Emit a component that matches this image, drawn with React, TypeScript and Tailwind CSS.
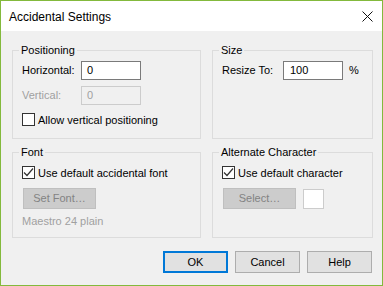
import type { ReactNode } from 'react';

const Group = ({ title, className, children }: { title: string; className: string; children: ReactNode }) => (
  <div className={`relative border border-[#dcdcdc] ${className}`}>
    <span className="absolute left-[6px] -top-[8px] bg-[#f0f0f0] px-[2px] leading-[14px]">{title}</span>
    {children}
  </div>
);

const CheckBox = ({ checked, label }: { checked?: boolean; label: string }) => (
  <div className="flex items-center h-[13px]">
    <div className="w-[13px] h-[13px] border border-[#333333] bg-white flex items-center justify-center">
      {checked && (
        <svg width="11" height="11" viewBox="0 0 11 11">
          <path d="M1 5.5 L4 8.5 L10 1.5" fill="none" stroke="#333333" strokeWidth="1.2" />
        </svg>
      )}
    </div>
    <span className="ml-[3px] leading-[14px]">{label}</span>
  </div>
);

const DisabledButton = ({ label }: { label: string }) => (
  <div className="w-[73px] h-[21px] bg-[#cccccc] border border-[#bfbfbf] text-[#838383] flex items-center justify-center">
    {label}
  </div>
);

const App = () => {
  return (
    <div
      className="w-[383px] h-[286px] border border-[#83b93c] bg-[#f0f0f0] flex flex-col text-[11px] text-black"
      style={{ fontFamily: '"Liberation Sans", Arial, sans-serif' }}
    >
      <div className="h-[30px] bg-white flex items-center justify-between pl-[8px] pr-[9px]">
        <span className="text-[12px] mt-[1px]">Accidental Settings</span>
        <svg width="11" height="11" viewBox="0 0 11 11">
          <path d="M0.5 0.5 L10.5 10.5 M10.5 0.5 L0.5 10.5" stroke="#111111" strokeWidth="1" />
        </svg>
      </div>

      <div className="flex-1 flex flex-col pl-[11px] pr-[9px] pt-[19px]">
        <div className="grid grid-cols-[189px_161px] grid-rows-[89px_86px] gap-x-[11px] gap-y-[13px]">
          <Group title="Positioning" className="pl-[9px] pt-[10px]">
            <div className="flex items-center">
              <span className="w-[59px]">Horizontal:</span>
              <div className="w-[60px] h-[19px] bg-white border border-[#7a7a7a] pl-[5px] flex items-center">0</div>
            </div>
            <div className="flex items-center mt-[6px]">
              <span className="w-[59px] text-[#a0a0a0]">Vertical:</span>
              <div className="w-[60px] h-[19px] bg-[#f0f0f0] border border-[#cccccc] text-[#a0a0a0] pl-[5px] flex items-center">0</div>
            </div>
            <div className="mt-[8px]">
              <CheckBox label="Allow vertical positioning" />
            </div>
          </Group>

          <Group title="Size" className="pl-[9px] pt-[10px]">
            <div className="flex items-center">
              <span className="w-[61px]">Resize To:</span>
              <div className="w-[60px] h-[19px] bg-white border border-[#7a7a7a] pl-[6px] flex items-center">100</div>
              <span className="ml-[6px]">%</span>
            </div>
          </Group>

          <Group title="Font" className="pl-[9px] pt-[13px]">
            <CheckBox checked label="Use default accidental font" />
            <div className="mt-[9px] ml-[1px]">
              <DisabledButton label="Set Font…" />
            </div>
            <div className="mt-[5px] text-[#a0a0a0] leading-[14px]">Maestro 24 plain</div>
          </Group>

          <Group title="Alternate Character" className="pl-[9px] pt-[13px]">
            <CheckBox checked label="Use default character" />
            <div className="mt-[9px] ml-[1px] flex items-start gap-[7px]">
              <DisabledButton label="Select…" />
              <div className="w-[21px] h-[20px] mt-[1px] bg-white border border-[#cccccc]" />
            </div>
          </Group>
        </div>

        <div className="mt-[13px] pr-[1px] flex justify-end gap-[7px]">
          <button className="w-[65px] h-[22px] bg-[#e1e1e1] border-2 border-[#0078d7] flex items-center justify-center">OK</button>
          <button className="w-[65px] h-[22px] bg-[#e1e1e1] border border-[#adadad] flex items-center justify-center">Cancel</button>
          <button className="w-[65px] h-[22px] bg-[#e1e1e1] border border-[#adadad] flex items-center justify-center">Help</button>
        </div>
      </div>
    </div>
  );
};

export default App;
